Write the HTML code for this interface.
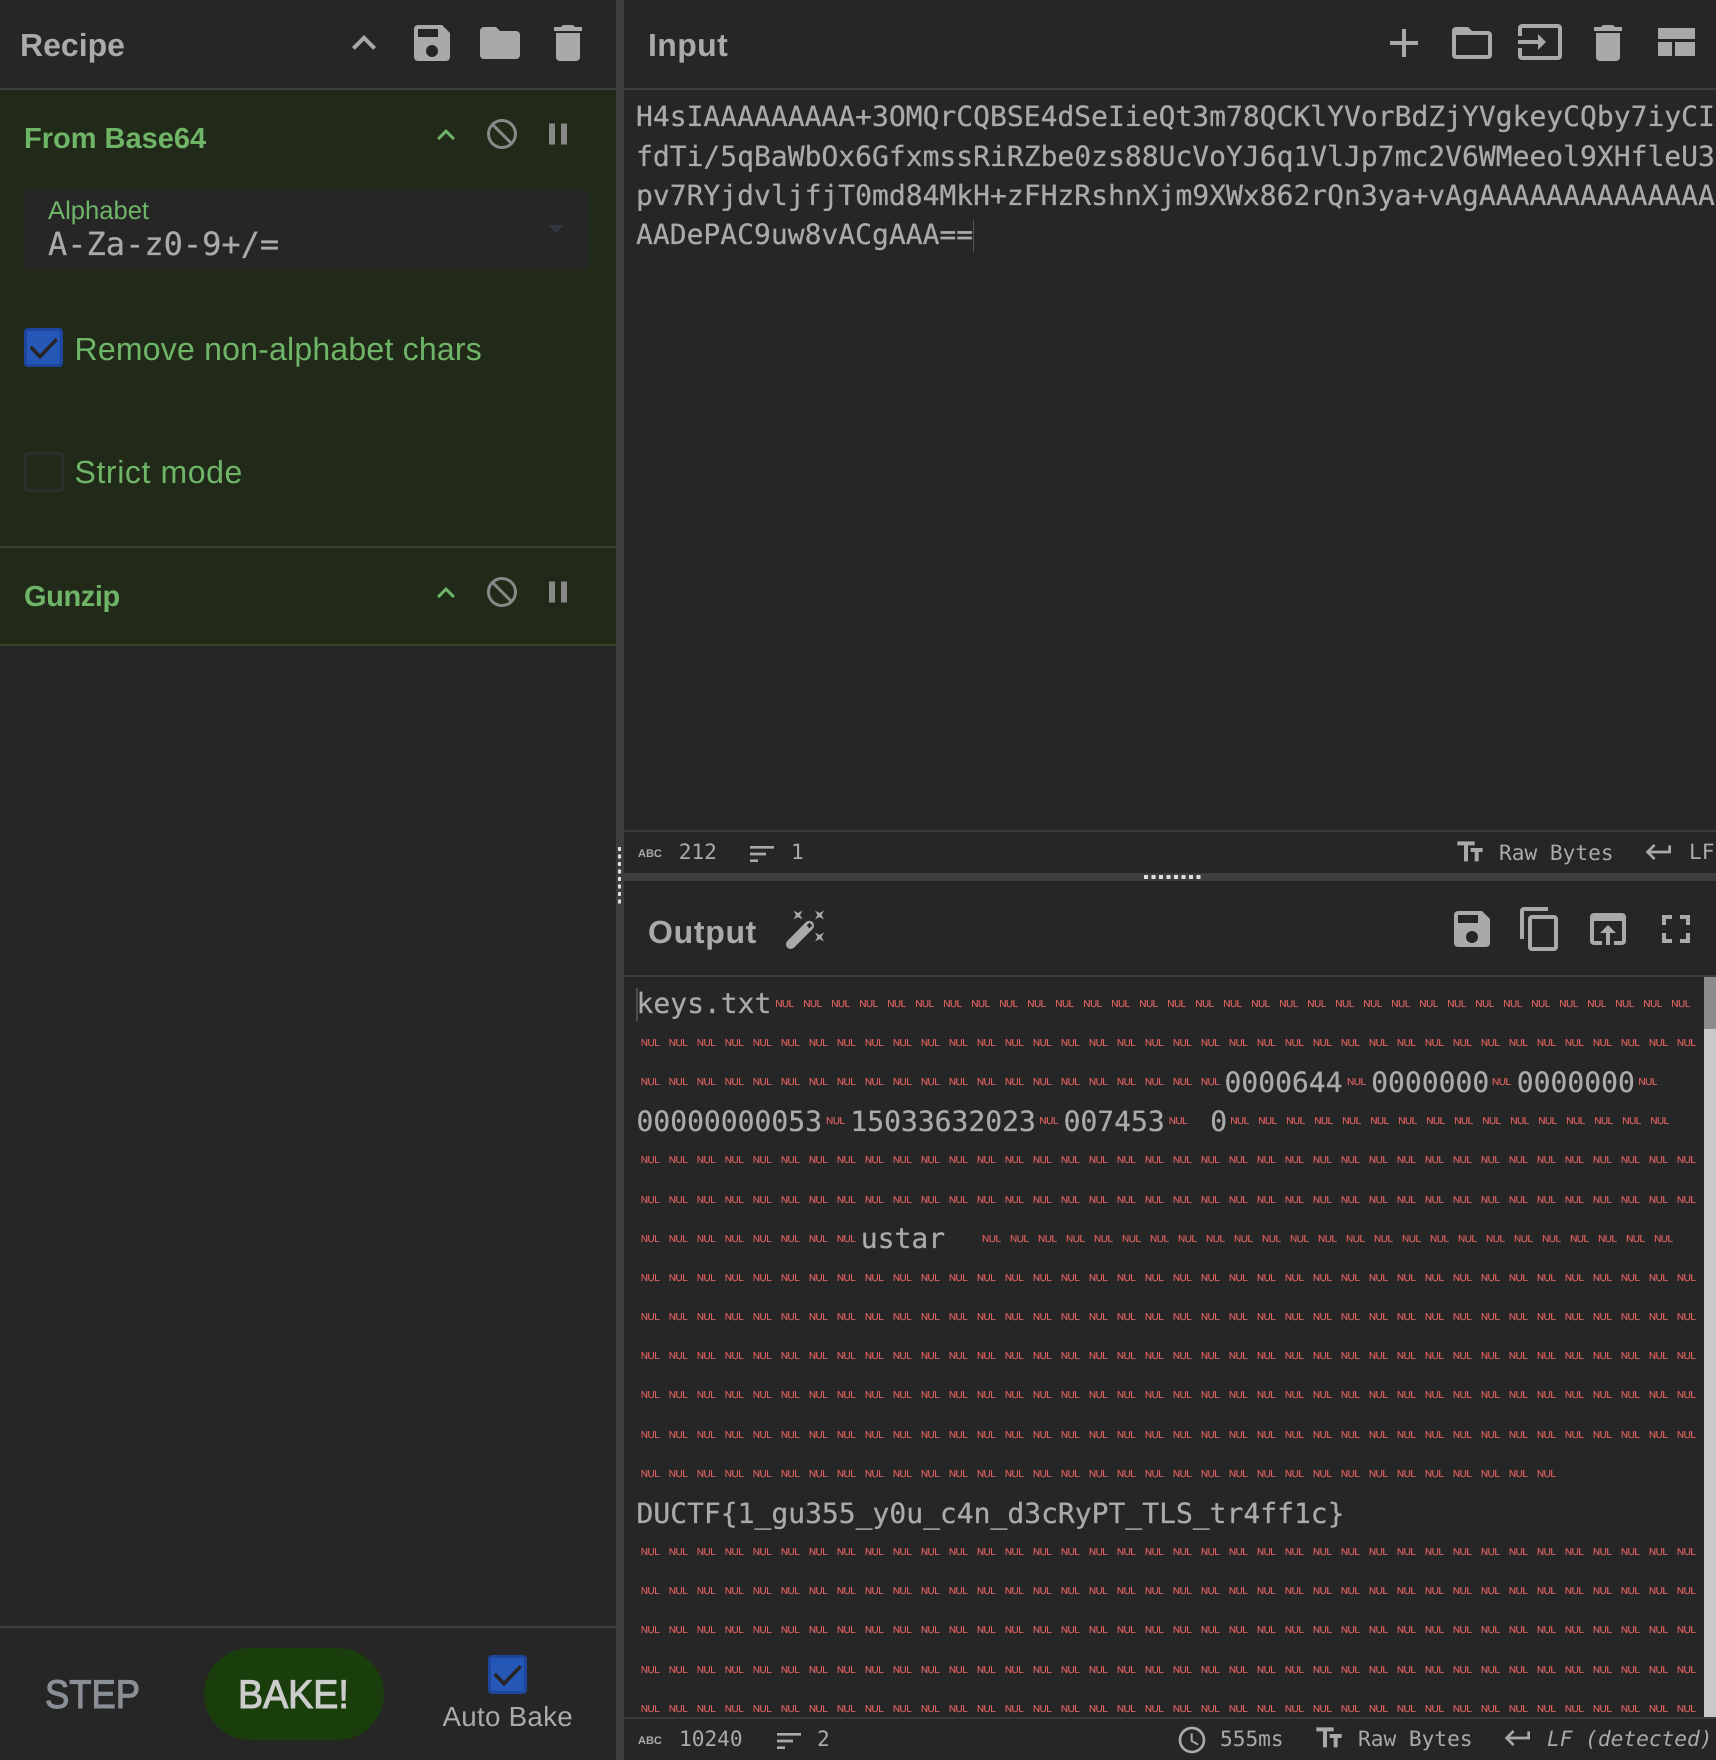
<!DOCTYPE html>
<html><head><meta charset="utf-8"><style>
html,body{margin:0;padding:0;background:#262626;width:1716px;height:1760px;overflow:hidden}
body{position:relative;font-family:"Liberation Sans",sans-serif;color:#aaa;text-rendering:geometricPrecision}
.a{position:absolute}
.t{position:absolute;white-space:pre;line-height:40px}
.h{font-size:32px;font-weight:700}
.g{color:#6fb568}
.m{position:absolute;white-space:pre;font-family:"DejaVu Sans Mono","Liberation Mono",monospace;font-size:28px;line-height:40px;color:#aaa;-webkit-text-stroke:.25px #aaa}
#o .m{margin-top:.8px}
.s{position:absolute;white-space:pre;font-family:"DejaVu Sans Mono","Liberation Mono",monospace;font-size:21.15px;line-height:30px;color:#aaa}
.n{position:absolute;white-space:pre;font-size:10px;line-height:14px;margin-top:1.2px;letter-spacing:-.5px;word-spacing:7.22px;color:#e86464;font-kerning:none;-webkit-text-stroke:.12px #e86464}
.c{position:absolute;font-size:11px;font-weight:700;line-height:14px;color:#aaa}
svg{position:absolute;fill:#a9a9a9}
</style></head><body>

<div class="a" style="left:616px;top:0;width:8px;height:1760px;background:#3e3e3e"></div>
<div class="a" style="left:618px;top:847px;width:3px;height:60px;background:repeating-linear-gradient(to bottom,#ddd 0,#ddd 4px,transparent 4px,transparent 7.5px)"></div>

<!-- recipe -->
<div class="a" style="left:0;top:88px;width:616px;height:2px;background:#3e3e3e"></div>
<div class="a" style="left:0;top:90px;width:616px;height:555px;background:#212a19"></div>
<div class="a" style="left:0;top:546px;width:616px;height:2px;background:#36452a"></div>
<div class="a" style="left:0;top:644px;width:616px;height:2px;background:#36452a"></div>
<div class="t h" style="left:20px;top:25px">Recipe</div>
<svg style="left:340px;top:19px" width="48" height="48" viewBox="0 0 24 24"><path d="M7.41 15.41L12 10.83l4.59 4.58L18 14l-6-6-6 6z"/></svg>
<svg style="left:408px;top:19px" width="48" height="48" viewBox="0 0 24 24"><path d="M17 3H5c-1.11 0-2 .9-2 2v14c0 1.1.89 2 2 2h14c1.1 0 2-.9 2-2V7l-4-4zm-5 16c-1.66 0-3-1.34-3-3s1.34-3 3-3 3 1.34 3 3-1.34 3-3 3zm3-10H5V5h10v4z"/></svg>
<svg style="left:476px;top:19px" width="48" height="48" viewBox="0 0 24 24"><path d="M10 4H4c-1.1 0-1.99.9-1.99 2L2 18c0 1.1.9 2 2 2h16c1.1 0 2-.9 2-2V8c0-1.1-.9-2-2-2h-8l-2-2z"/></svg>
<svg style="left:544px;top:19px" width="48" height="48" viewBox="0 0 24 24"><path d="M6 19c0 1.1.9 2 2 2h8c1.1 0 2-.9 2-2V7H6v12zM19 4h-3.5l-1-1h-5l-1 1H5v2h14V4z"/></svg>

<div class="t g" style="left:24px;top:119px;font-size:29px;font-weight:700">From Base64</div>
<svg style="left:428px;top:117px;fill:#6fb568" width="36" height="36" viewBox="0 0 24 24"><path d="M7.41 15.41L12 10.83l4.59 4.58L18 14l-6-6-6 6z"/></svg>
<svg style="left:484px;top:116px;fill:#888;transform:scaleX(-1)" width="36" height="36" viewBox="0 0 24 24"><path d="M12 2C6.48 2 2 6.48 2 12s4.48 10 10 10 10-4.48 10-10S17.52 2 12 2zM4 12c0-4.42 3.58-8 8-8 1.85 0 3.55.63 4.9 1.69L5.69 16.9C4.63 15.55 4 13.85 4 12zm8 8c-1.85 0-3.55-.63-4.9-1.69L18.31 7.1C19.37 8.45 20 10.15 20 12c0 4.42-3.58 8-8 8z"/></svg>
<svg style="left:540px;top:116px;fill:#888" width="36" height="36" viewBox="0 0 24 24"><path d="M6 19h4V5H6v14zm8-14v14h4V5h-4z"/></svg>

<div class="a" style="left:24px;top:190px;width:564px;height:79px;background:#262626;border-radius:3px"></div>
<div class="t g" style="left:48px;top:196px;font-size:25.6px;line-height:30px">Alphabet</div>
<div class="m" style="left:48px;top:223.5px;font-size:32px">A-Za-z0-9+/=</div>
<div class="a" style="left:548px;top:225px;width:0;height:0;border-left:8px solid transparent;border-right:8px solid transparent;border-top:8px solid #2f3640"></div>

<div class="a" style="left:24px;top:328px;width:33px;height:33px;background:#2558b6;border:3.5px solid #1c479c;border-radius:4px"></div>
<svg style="left:24px;top:328px;fill:none" width="40" height="40" viewBox="0 0 40 40"><path d="M6.7 19L16 28.7 32.7 11.3" fill="none" stroke="#262626" stroke-width="3.6"/></svg>
<div class="t g" style="left:74.5px;top:329px;font-size:32px;letter-spacing:.22px">Remove non-alphabet chars</div>

<div class="a" style="left:24px;top:452px;width:34px;height:34px;border:3px solid #2d2f2d;border-radius:4px"></div>
<div class="t g" style="left:74.5px;top:452px;font-size:32px;letter-spacing:.6px">Strict mode</div>

<div class="t g" style="left:24px;top:577px;font-size:29px;font-weight:700;letter-spacing:-.4px">Gunzip</div>
<svg style="left:428px;top:575px;fill:#6fb568" width="36" height="36" viewBox="0 0 24 24"><path d="M7.41 15.41L12 10.83l4.59 4.58L18 14l-6-6-6 6z"/></svg>
<svg style="left:484px;top:574px;fill:#888;transform:scaleX(-1)" width="36" height="36" viewBox="0 0 24 24"><path d="M12 2C6.48 2 2 6.48 2 12s4.48 10 10 10 10-4.48 10-10S17.52 2 12 2zM4 12c0-4.42 3.58-8 8-8 1.85 0 3.55.63 4.9 1.69L5.69 16.9C4.63 15.55 4 13.85 4 12zm8 8c-1.85 0-3.55-.63-4.9-1.69L18.31 7.1C19.37 8.45 20 10.15 20 12c0 4.42-3.58 8-8 8z"/></svg>
<svg style="left:540px;top:574px;fill:#888" width="36" height="36" viewBox="0 0 24 24"><path d="M6 19h4V5H6v14zm8-14v14h4V5h-4z"/></svg>

<!-- footer -->
<div class="a" style="left:0;top:1626px;width:616px;height:2px;background:#3e3e3e"></div>
<div class="t" style="left:45px;top:1670px;font-size:40px;line-height:50px;color:#8a8f96;-webkit-text-stroke:1.1px #8a8f96;transform:scaleX(.91);transform-origin:0 0">STEP</div>
<div class="a" style="left:204px;top:1648px;width:180px;height:92px;border-radius:46px;background:#1a3d0c"></div>
<div class="t" style="left:238px;top:1670px;font-size:40px;line-height:50px;color:#ccc;-webkit-text-stroke:1.1px #ccc;transform:scaleX(.94);transform-origin:0 0">BAKE!</div>
<div class="a" style="left:488px;top:1655px;width:33px;height:33px;background:#2558b6;border:3.5px solid #1c479c;border-radius:4px"></div>
<svg style="left:488px;top:1655px;fill:none" width="40" height="40" viewBox="0 0 40 40"><path d="M6.7 19L16 28.7 32.7 11.3" fill="none" stroke="#262626" stroke-width="3.6"/></svg>
<div class="t" style="left:442.5px;top:1699px;font-size:27.7px;line-height:36px;letter-spacing:.3px">Auto Bake</div>

<!-- input -->
<div class="a" style="left:624px;top:88px;width:1092px;height:2px;background:#3e3e3e"></div>
<div class="t h" style="left:648px;top:25px;letter-spacing:.4px">Input</div>
<svg style="left:1380px;top:19px" width="48" height="48" viewBox="0 0 24 24"><path d="M19 13h-6v6h-2v-6H5v-2h6V5h2v6h6v2z"/></svg>
<svg style="left:1448px;top:19px" width="48" height="48" viewBox="0 0 24 24"><path d="M20 6h-8l-2-2H4c-1.1 0-1.99.9-1.99 2L2 18c0 1.1.9 2 2 2h16c1.1 0 2-.9 2-2V8c0-1.1-.9-2-2-2zm0 12H4V8h16v10z"/></svg>
<svg style="left:1516px;top:18px" width="48" height="48" viewBox="0 0 24 24"><path d="M21 3.01H3c-1.1 0-2 .9-2 2V9h2V4.99h18v14.03H3V15H1v4.01c0 1.1.9 1.98 2 1.98h18c1.1 0 2-.88 2-1.98v-14c0-1.11-.9-2-2-2zM11 16l4-4-4-4v3H1v2h10v3z"/></svg>
<svg style="left:1584px;top:19px" width="48" height="48" viewBox="0 0 24 24"><path d="M6 19c0 1.1.9 2 2 2h8c1.1 0 2-.9 2-2V7H6v12zM19 4h-3.5l-1-1h-5l-1 1H5v2h14V4z"/></svg>
<div class="a" style="left:1658px;top:28px;width:37px;height:11px;background:#a9a9a9"></div>
<div class="a" style="left:1658px;top:42px;width:14px;height:14px;background:#a9a9a9"></div>
<div class="a" style="left:1675px;top:42px;width:20px;height:14px;background:#a9a9a9"></div>

<div class="m" style="left:636px;top:97px">H4sIAAAAAAAAA+3OMQrCQBSE4dSeIieQt3m78QCKlYVorBdZjYVgkeyCQby7iyCI</div>
<div class="m" style="left:636px;top:136.8px">fdTi/5qBaWbOx6GfxmssRiRZbe0zs88UcVoYJ6q1VlJp7mc2V6WMeeol9XHfleU3</div>
<div class="m" style="left:636px;top:175.6px">pv7RYjdvljfjT0md84MkH+zFHzRshnXjm9XWx862rQn3ya+vAgAAAAAAAAAAAAAA</div>
<div class="m" style="left:636px;top:215.4px">AADePAC9uw8vACgAAA==</div>
<div class="a" style="left:973px;top:220px;width:1px;height:32px;background:#555"></div>

<div class="a" style="left:624px;top:830px;width:1092px;height:2px;background:#3a3a3a"></div>
<div class="c" style="left:638px;top:847px">ABC</div>
<div class="s" style="left:678.7px;top:836.7px">212</div>
<svg style="left:746px;top:838px" width="32" height="32" viewBox="0 0 24 24"><path d="M3 18h6v-2H3v2zM3 6v2h18V6H3zm0 7h12v-2H3v2z"/></svg>
<div class="s" style="left:791px;top:836.7px">1</div>
<svg style="left:1454px;top:836px" width="32" height="32" viewBox="0 0 24 24"><path d="M2.5 4v3h5v12h3V7h5V4h-13zm19 5h-9v3h3v7h3v-7h3V9z"/></svg>
<div class="s" style="left:1499px;top:837.7px">Raw Bytes</div>
<svg style="left:1643px;top:836px" width="32" height="32" viewBox="0 0 24 24"><path d="M19 7v4H5.83l3.58-3.59L8 6l-6 6 6 6 1.41-1.41L5.83 13H21V7z"/></svg>
<div class="s" style="left:1689px;top:836.7px">LF</div>

<div class="a" style="left:624px;top:873px;width:1092px;height:8px;background:#3e3e3e"></div>
<div class="a" style="left:1144px;top:875px;width:60px;height:4px;background:repeating-linear-gradient(to right,#ddd 0,#ddd 4px,transparent 4px,transparent 7.5px)"></div>

<!-- output -->
<div class="t h" style="left:648px;top:912px;letter-spacing:.7px">Output</div>
<svg style="left:770px;top:890px" width="80" height="80" viewBox="0 0 80 80"><path d="M23.5 20.5L28 23l4.500-2.500L30 25l2.500 4.500L28 27l-4.500 2.500L26 25zM45 20.500L49.500 23l4.500-2.500L51.500 25l2.500 4.500L49.500 27 45 29.500 47.500 25zM45 42.500L49.500 45l4.500-2.500L51.500 47l2.500 4.500L49.500 49 45 51.500 47.500 47z"/><path d="M20.700 54.300L39.300 35.500" stroke="#a9a9a9" stroke-width="9.500" stroke-linecap="round" fill="none"/><rect x="37.500" y="33.500" width="4" height="4" fill="#262626" transform="rotate(45 39.500 35.500)"/></svg>
<svg style="left:1448px;top:905px" width="48" height="48" viewBox="0 0 24 24"><path d="M17 3H5c-1.11 0-2 .9-2 2v14c0 1.1.89 2 2 2h14c1.1 0 2-.9 2-2V7l-4-4zm-5 16c-1.66 0-3-1.34-3-3s1.34-3 3-3 3 1.34 3 3-1.34 3-3 3zm3-10H5V5h10v4z"/></svg>
<svg style="left:1516px;top:905px" width="48" height="48" viewBox="0 0 24 24"><path d="M16 1H4c-1.1 0-2 .9-2 2v14h2V3h12V1zm3 4H8c-1.1 0-2 .9-2 2v14c0 1.1.9 2 2 2h11c1.1 0 2-.9 2-2V7c0-1.1-.9-2-2-2zm0 16H8V7h11v14z"/></svg>
<svg style="left:1584px;top:905px" width="48" height="48" viewBox="0 0 24 24"><path d="M19 4H5c-1.11 0-2 .9-2 2v12c0 1.1.89 2 2 2h4v-2H5V8h14v10h-4v2h4c1.1 0 2-.9 2-2V6c0-1.1-.89-2-2-2zm-7 6l-4 4h3v6h2v-6h3l-4-4z"/></svg>
<svg style="left:1652px;top:905px" width="48" height="48" viewBox="0 0 24 24"><path d="M7 14H5v5h5v-2H7v-3zm-2-4h2V7h3V5H5v5zm12 7h-3v2h5v-5h-2v3zM14 5v2h3v3h2V5h-5z"/></svg>
<div class="a" style="left:624px;top:975px;width:1092px;height:2px;background:#3e3e3e"></div>

<div class="a" style="left:1704px;top:977px;width:12px;height:740px;background:#c9c9c9"></div>
<div class="a" style="left:1704px;top:977px;width:12px;height:52px;background:#8c8c8c"></div>

<div class="a" id="o" style="left:0;top:0;width:1704px;height:1717px;overflow:hidden">
<div class="a" style="left:635.5px;top:988px;width:2px;height:33px;background:#4c4c4c"></div>
<div class="m" style="left:636.5px;top:983.6px">keys.txt</div>
<div class="n" style="left:775.2px;top:996.5px">NUL NUL NUL NUL NUL NUL NUL NUL NUL NUL NUL NUL NUL NUL NUL NUL NUL NUL NUL NUL NUL NUL NUL NUL NUL NUL NUL NUL NUL NUL NUL NUL NUL</div>
<div class="n" style="left:640.8px;top:1035.7px">NUL NUL NUL NUL NUL NUL NUL NUL NUL NUL NUL NUL NUL NUL NUL NUL NUL NUL NUL NUL NUL NUL NUL NUL NUL NUL NUL NUL NUL NUL NUL NUL NUL NUL NUL NUL NUL NUL</div>
<div class="n" style="left:640.8px;top:1074.8px">NUL NUL NUL NUL NUL NUL NUL NUL NUL NUL NUL NUL NUL NUL NUL NUL NUL NUL NUL NUL NUL</div>
<div class="m" style="left:1224.5px;top:1061.9px">0000644</div>
<div class="n" style="left:1347px;top:1074.8px">NUL</div>
<div class="m" style="left:1371.2px;top:1061.9px">0000000</div>
<div class="n" style="left:1492px;top:1074.8px">NUL</div>
<div class="m" style="left:1516.8px;top:1061.9px">0000000</div>
<div class="n" style="left:1638.4px;top:1074.8px">NUL</div>
<div class="m" style="left:636.5px;top:1101.1px">00000000053</div>
<div class="n" style="left:826px;top:1114px">NUL</div>
<div class="m" style="left:850.4px;top:1101.1px">15033632023</div>
<div class="n" style="left:1039.4px;top:1114px">NUL</div>
<div class="m" style="left:1063.6px;top:1101.1px">007453</div>
<div class="n" style="left:1168.7px;top:1114px">NUL</div>
<div class="m" style="left:1210.2px;top:1101.1px">0</div>
<div class="n" style="left:1230.2px;top:1114px">NUL NUL NUL NUL NUL NUL NUL NUL NUL NUL NUL NUL NUL NUL NUL NUL</div>
<div class="n" style="left:640.8px;top:1153.2px">NUL NUL NUL NUL NUL NUL NUL NUL NUL NUL NUL NUL NUL NUL NUL NUL NUL NUL NUL NUL NUL NUL NUL NUL NUL NUL NUL NUL NUL NUL NUL NUL NUL NUL NUL NUL NUL NUL</div>
<div class="n" style="left:640.8px;top:1192.4px">NUL NUL NUL NUL NUL NUL NUL NUL NUL NUL NUL NUL NUL NUL NUL NUL NUL NUL NUL NUL NUL NUL NUL NUL NUL NUL NUL NUL NUL NUL NUL NUL NUL NUL NUL NUL NUL NUL</div>
<div class="n" style="left:640.8px;top:1231.5px">NUL NUL NUL NUL NUL NUL NUL NUL</div>
<div class="m" style="left:860.8px;top:1218.6px">ustar</div>
<div class="n" style="left:982px;top:1231.5px">NUL NUL NUL NUL NUL NUL NUL NUL NUL NUL NUL NUL NUL NUL NUL NUL NUL NUL NUL NUL NUL NUL NUL NUL NUL</div>
<div class="n" style="left:640.8px;top:1270.7px">NUL NUL NUL NUL NUL NUL NUL NUL NUL NUL NUL NUL NUL NUL NUL NUL NUL NUL NUL NUL NUL NUL NUL NUL NUL NUL NUL NUL NUL NUL NUL NUL NUL NUL NUL NUL NUL NUL</div>
<div class="n" style="left:640.8px;top:1309.9px">NUL NUL NUL NUL NUL NUL NUL NUL NUL NUL NUL NUL NUL NUL NUL NUL NUL NUL NUL NUL NUL NUL NUL NUL NUL NUL NUL NUL NUL NUL NUL NUL NUL NUL NUL NUL NUL NUL</div>
<div class="n" style="left:640.8px;top:1349px">NUL NUL NUL NUL NUL NUL NUL NUL NUL NUL NUL NUL NUL NUL NUL NUL NUL NUL NUL NUL NUL NUL NUL NUL NUL NUL NUL NUL NUL NUL NUL NUL NUL NUL NUL NUL NUL NUL</div>
<div class="n" style="left:640.8px;top:1388.2px">NUL NUL NUL NUL NUL NUL NUL NUL NUL NUL NUL NUL NUL NUL NUL NUL NUL NUL NUL NUL NUL NUL NUL NUL NUL NUL NUL NUL NUL NUL NUL NUL NUL NUL NUL NUL NUL NUL</div>
<div class="n" style="left:640.8px;top:1427.4px">NUL NUL NUL NUL NUL NUL NUL NUL NUL NUL NUL NUL NUL NUL NUL NUL NUL NUL NUL NUL NUL NUL NUL NUL NUL NUL NUL NUL NUL NUL NUL NUL NUL NUL NUL NUL NUL NUL</div>
<div class="n" style="left:640.8px;top:1466.5px">NUL NUL NUL NUL NUL NUL NUL NUL NUL NUL NUL NUL NUL NUL NUL NUL NUL NUL NUL NUL NUL NUL NUL NUL NUL NUL NUL NUL NUL NUL NUL NUL NUL</div>
<div class="m" style="left:636.5px;top:1492.8px">DUCTF{1_gu355_y0u_c4n_d3cRyPT_TLS_tr4ff1c}</div>
<div class="n" style="left:640.8px;top:1544.9px">NUL NUL NUL NUL NUL NUL NUL NUL NUL NUL NUL NUL NUL NUL NUL NUL NUL NUL NUL NUL NUL NUL NUL NUL NUL NUL NUL NUL NUL NUL NUL NUL NUL NUL NUL NUL NUL NUL</div>
<div class="n" style="left:640.8px;top:1584px">NUL NUL NUL NUL NUL NUL NUL NUL NUL NUL NUL NUL NUL NUL NUL NUL NUL NUL NUL NUL NUL NUL NUL NUL NUL NUL NUL NUL NUL NUL NUL NUL NUL NUL NUL NUL NUL NUL</div>
<div class="n" style="left:640.8px;top:1623.2px">NUL NUL NUL NUL NUL NUL NUL NUL NUL NUL NUL NUL NUL NUL NUL NUL NUL NUL NUL NUL NUL NUL NUL NUL NUL NUL NUL NUL NUL NUL NUL NUL NUL NUL NUL NUL NUL NUL</div>
<div class="n" style="left:640.8px;top:1662.4px">NUL NUL NUL NUL NUL NUL NUL NUL NUL NUL NUL NUL NUL NUL NUL NUL NUL NUL NUL NUL NUL NUL NUL NUL NUL NUL NUL NUL NUL NUL NUL NUL NUL NUL NUL NUL NUL NUL</div>
<div class="n" style="left:640.8px;top:1701.5px">NUL NUL NUL NUL NUL NUL NUL NUL NUL NUL NUL NUL NUL NUL NUL NUL NUL NUL NUL NUL NUL NUL NUL NUL NUL NUL NUL NUL NUL NUL NUL NUL NUL NUL NUL NUL NUL NUL</div>
</div>

<div class="a" style="left:624px;top:1717px;width:1092px;height:2px;background:#3a3a3a"></div>
<div class="c" style="left:638px;top:1734.2px">ABC</div>
<div class="s" style="left:679px;top:1723.7px">10240</div>
<svg style="left:773px;top:1725px" width="32" height="32" viewBox="0 0 24 24"><path d="M3 18h6v-2H3v2zM3 6v2h18V6H3zm0 7h12v-2H3v2z"/></svg>
<div class="s" style="left:817px;top:1723.7px">2</div>
<svg style="left:1175.5px;top:1724px" width="32" height="32" viewBox="0 0 24 24"><path d="M11.99 2C6.47 2 2 6.48 2 12s4.47 10 9.99 10C17.52 22 22 17.52 22 12S17.52 2 11.99 2zM12 20c-4.42 0-8-3.58-8-8s3.58-8 8-8 8 3.58 8 8-3.58 8-8 8zm.5-13H11v6l5.25 3.15.75-1.23-4.5-2.67z"/></svg>
<div class="s" style="left:1220px;top:1724px">555ms</div>
<svg style="left:1313px;top:1722px" width="32" height="32" viewBox="0 0 24 24"><path d="M2.5 4v3h5v12h3V7h5V4h-13zm19 5h-9v3h3v7h3v-7h3V9z"/></svg>
<div class="s" style="left:1358px;top:1724px">Raw Bytes</div>
<svg style="left:1502px;top:1722px" width="32" height="32" viewBox="0 0 24 24"><path d="M19 7v4H5.83l3.58-3.59L8 6l-6 6 6 6 1.41-1.41L5.83 13H21V7z"/></svg>
<div class="s" style="left:1547px;top:1724px;font-style:italic">LF (detected)</div>
</body></html>
